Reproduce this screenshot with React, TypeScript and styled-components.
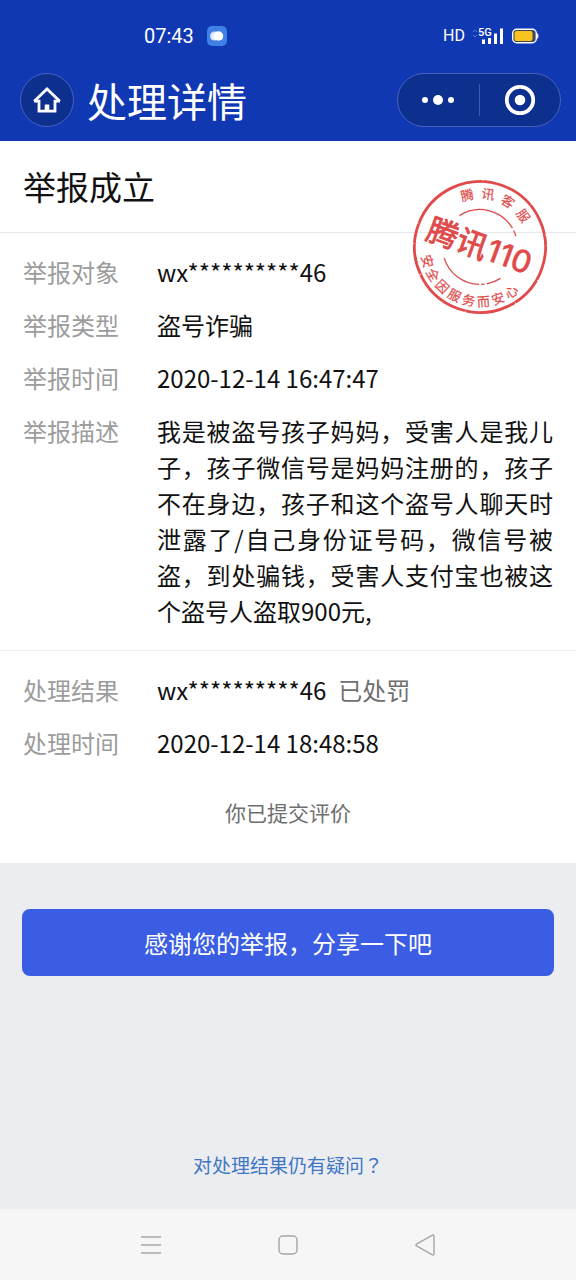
import React from 'react';
import styled, { createGlobalStyle } from 'styled-components';

const cjk = '"Noto Sans CJK SC", "Noto Sans", sans-serif';

const GlobalStyle = createGlobalStyle`
  *, *::before, *::after { box-sizing: border-box; }
  body {
    margin: 0;
    background: #ecedf1;
    font-family: ${cjk};
    color: #111;
  }
`;

const Page = styled.div`
  display: flex;
  flex-direction: column;
  min-height: 100vh;
`;

const Header = styled.header`
  background: #1138b3;
  color: #fff;
  padding-bottom: 14px;
`;

const StatusBar = styled.div`
  display: flex;
  align-items: center;
  justify-content: space-between;
  height: 73px;
  padding: 0 37px 2px 144px;
  font-family: Roboto, sans-serif;
`;

const StatusGroup = styled.div<{ $gap: number }>`
  display: flex;
  align-items: center;
  gap: ${({ $gap }) => $gap}px;
`;

const Clock = styled.time`
  font-size: 20px;
  line-height: 24px;
`;

const NetworkLabel = styled.span`
  font-size: 16px;
  line-height: 24px;
`;

const Signals = styled.div`
  display: flex;
  align-items: center;
  gap: 8px;
`;

const TitleBar = styled.div`
  display: flex;
  align-items: center;
  height: 54px;
  padding: 0 15px 0 20px;
`;

const HomeButton = styled.button`
  display: grid;
  place-items: center;
  width: 54px;
  height: 54px;
  padding: 0;
  border: 1px solid #4662bd;
  border-radius: 50%;
  background: #0d2f8e;
  color: #fff;
`;

const PageTitle = styled.h1`
  flex: 1;
  margin: 0 0 0 13px;
  font-size: 40px;
  font-weight: 400;
  line-height: 54px;
`;

const Capsule = styled.div`
  display: flex;
  align-items: center;
  width: 164px;
  height: 54px;
  border: 1px solid #4662bd;
  border-radius: 27px;
  background: #0d2f8e;
`;

const CapsuleButton = styled.button`
  display: grid;
  place-items: center;
  flex: 1;
  height: 32px;
  padding: 0;
  border: 0;
  background: none;
  color: #fff;

  & + & { border-left: 1px solid #3f59ab; }
`;

const Main = styled.main`
  display: flex;
  flex: 1;
  flex-direction: column;
`;

const Panel = styled.section`
  position: relative;
  background: #fff;
`;

const ResultTitle = styled.h2`
  margin: 0;
  padding: 21px 23px 22px;
  border-bottom: 1px solid #e9e9eb;
  font-size: 33px;
  font-weight: 400;
  line-height: 48px;
`;

const StampImage = styled.svg`
  position: absolute;
  top: 36px;
  right: 26px;
  width: 140px;
  height: 140px;
`;

const Details = styled.dl<{ $divided?: boolean }>`
  display: flex;
  flex-direction: column;
  gap: 17px;
  margin: 0;
  padding: 21px 23px ${({ $divided }) => ($divided ? 21 : 0)}px;
  border-bottom: ${({ $divided }) => ($divided ? '1px solid #ededef' : '0')};
`;

const DetailRow = styled.div`
  display: flex;
  font-size: 24px;
  line-height: 36px;
`;

const Label = styled.dt`
  flex: none;
  width: 134px;
  color: #9c9c9c;
`;

const Value = styled.dd`
  flex: 1;
  min-width: 0;
  margin: 0;
  text-align: justify;
`;

const Verdict = styled.span`
  margin-left: 12px;
  color: #707070;
`;

const ReviewNote = styled.p`
  margin: 0;
  padding: 33px 22px;
  color: #6e6e6e;
  font-size: 21px;
  line-height: 36px;
  text-align: center;
`;

const Actions = styled.div`
  display: flex;
  flex: 1;
  flex-direction: column;
  align-items: center;
  justify-content: space-between;
  gap: 46px;
  padding: 46px 22px 26px;
`;

const ShareButton = styled.button`
  width: 100%;
  height: 67px;
  padding: 0;
  border: 0;
  border-radius: 8px;
  background: #3a5de4;
  color: #fff;
  font-family: ${cjk};
  font-size: 24px;
  line-height: 36px;
`;

const HelpLink = styled.a`
  color: #3e76c4;
  font-size: 19px;
  line-height: 36px;
  text-decoration: none;
`;

const CenteredMark = styled.span`
  font-family: "Noto Sans CJK TC", sans-serif;
`;

const SystemNav = styled.nav`
  display: grid;
  grid-template-columns: repeat(3, 137px);
  justify-content: center;
  height: 71px;
  background: #f6f6f6;
`;

const SystemButton = styled.button`
  display: grid;
  place-items: center;
  padding: 0;
  border: 0;
  background: none;
  color: #a6a6a6;
`;

const RED = '#e04a4a';

/* Positions each character of a string around a circle, centred on the stamp's axis. */
function ring(text: string, radius: number, step: number, size: number, bottom = false) {
  const xs: string[] = [];
  const ys: string[] = [];
  const turns: string[] = [];
  Array.from(text).forEach((_, i, all) => {
    const offset = (i - (all.length - 1) / 2) * step;
    const turn = bottom ? -offset : offset;
    const a = (turn * Math.PI) / 180;
    const r = bottom ? radius : -radius;
    const cx = -r * Math.sin(a);
    const cy = r * Math.cos(a);
    const dx = -size / 2;
    const dy = size * 0.38;
    xs.push((cx + dx * Math.cos(a) - dy * Math.sin(a)).toFixed(2));
    ys.push((cy + dx * Math.sin(a) + dy * Math.cos(a)).toFixed(2));
    turns.push(turn.toFixed(2));
  });
  return { x: xs.join(' '), y: ys.join(' '), rotate: turns.join(' '), fontSize: size };
}

function Stamp() {
  return (
    <StampImage viewBox="-70 -70 140 140" role="img" aria-label="腾讯110">
      <g transform="rotate(20)" fill={RED} fontFamily={cjk}>
        <g fill="none" stroke={RED}>
          <circle r="65.5" strokeWidth="2.8" />
          <path d="M-30-22.5A37.5 37.5 0 0 1 24-28.8" strokeWidth="1.3" />
          <path d="M26-27A37.5 37.5 0 0 1 30-22.5" strokeWidth="1.3" />
          <path d="M-30 22.5A37.5 37.5 0 0 0 12 35.5M14 34.8L17 33.4M19 32.3A37.5 37.5 0 0 0 30 22.5" strokeWidth="1.3" />
          <g stroke="#fff" strokeWidth="0.8" opacity="0.75">
            <path d="M64-20l4 1M62-24l5 2M57-34l4 3M-63 19l-4 3M-66-2l-2 3M-46 46l-3 2M-17 64l-1 4M8 65l1 3M33-57l2-3M-20-63l1-4M65 12l3-1M52 40l3 4" />
          </g>
        </g>
        <g stroke={RED} strokeWidth="0.2">
          <text {...ring('腾讯客服', 53.5, 22.6, 13)}>腾讯客服</text>
          <text {...ring('安全因服务而安心', 54.5, 15.7, 13, true)}>安全因服务而安心</text>
        </g>
        <text x="-55" y="11" fontSize="31" stroke={RED} strokeWidth="0.9">
          腾讯
          <tspan dx="1" y="10" fontFamily="Inter, sans-serif" fontSize="31" fontWeight="500" strokeWidth="0.3">110</tspan>
        </text>
      </g>
    </StampImage>
  );
}

function WeatherIcon() {
  return (
    <svg width="20" height="20" viewBox="0 0 20 20" aria-hidden="true">
      <rect width="20" height="20" rx="5" fill="#3f7fe6" />
      <circle cx="7.5" cy="10" r="4.5" fill="#cfe2fb" />
      <rect x="5" y="7" width="11" height="7" rx="3.5" fill="#e9f2fe" />
      <circle cx="11.5" cy="10" r="4.7" fill="#fff" />
    </svg>
  );
}

function SignalIcon() {
  return (
    <svg width="31" height="18" viewBox="0 0 31 18" fill="#fff" aria-hidden="true">
      <path d="M1 5l2-2 2 2M1 8l2 2 2-2" fill="none" stroke="#5b78cf" strokeWidth="1" />
      <text x="6" y="9" fontSize="11" fontWeight="500" fontFamily="Roboto, sans-serif">5G</text>
      <path d="M10 12.5h3v4.5h-3zM16 11h3v6h-3zM22 6.5h3v10.5h-3zM28 1.5h3v15.5h-3z" />
    </svg>
  );
}

function BatteryIcon() {
  return (
    <svg width="28" height="16" viewBox="0 0 28 16" aria-hidden="true">
      <rect x="1.7" y="1.2" width="23.6" height="13.6" rx="4" fill="#3e4660" stroke="#fff" strokeWidth="1.4" />
      <rect x="3.5" y="3" width="18" height="10" rx="2" fill="#f8c31c" />
      <path d="M26.2 5.5c1.2.5 1.2 4.5 0 5z" fill="#fff" stroke="#fff" strokeWidth="0.6" />
    </svg>
  );
}

const report = [
  { label: '举报对象', value: 'wx**********46' },
  { label: '举报类型', value: '盗号诈骗' },
  { label: '举报时间', value: '2020-12-14 16:47:47' },
  {
    label: '举报描述',
    value:
      '我是被盗号孩子妈妈，受害人是我儿子，孩子微信号是妈妈注册的，孩子不在身边，孩子和这个盗号人聊天时泄露了/自己身份证号码，微信号被盗，到处骗钱，受害人支付宝也被这个盗号人盗取900元,',
  },
];

export default function App() {
  return (
    <Page lang="zh-CN">
      <GlobalStyle />
      <Header>
        <StatusBar>
          <StatusGroup $gap={13}>
            <Clock>07:43</Clock>
            <WeatherIcon />
          </StatusGroup>
          <StatusGroup $gap={7}>
            <NetworkLabel>HD</NetworkLabel>
            <Signals>
              <SignalIcon />
              <BatteryIcon />
            </Signals>
          </StatusGroup>
        </StatusBar>
        <TitleBar>
          <HomeButton type="button" aria-label="首页">
            <svg width="28" height="26" viewBox="0 0 28 26" fill="none" stroke="currentColor" strokeWidth="2.8" aria-hidden="true">
              <path d="M1.2 14.2L14 2l12.8 12.2" />
              <path d="M1 14.2h5v10h16v-10h5" strokeWidth="2.8" />
              <path d="M14 24v-6.5" strokeWidth="4.6" />
            </svg>
          </HomeButton>
          <PageTitle>处理详情</PageTitle>
          <Capsule>
            <CapsuleButton type="button" aria-label="更多">
              <svg width="32" height="10" viewBox="0 0 32 10" fill="currentColor" aria-hidden="true">
                <circle cx="3" cy="5" r="3" />
                <circle cx="16" cy="5" r="5" />
                <circle cx="29" cy="5" r="3" />
              </svg>
            </CapsuleButton>
            <CapsuleButton type="button" aria-label="关闭">
              <svg width="32" height="32" viewBox="0 0 32 32" aria-hidden="true">
                <circle cx="16" cy="16" r="13.2" fill="none" stroke="currentColor" strokeWidth="3.8" />
                <circle cx="16" cy="16" r="5.3" fill="currentColor" />
              </svg>
            </CapsuleButton>
          </Capsule>
        </TitleBar>
      </Header>

      <Main>
        <Panel>
          <ResultTitle>举报成立</ResultTitle>
          <Details $divided>
            {report.map(({ label, value }) => (
              <DetailRow key={label}>
                <Label>{label}</Label>
                <Value>{value}</Value>
              </DetailRow>
            ))}
          </Details>
          <Details>
            <DetailRow>
              <Label>处理结果</Label>
              <Value>
                wx**********46<Verdict>已处罚</Verdict>
              </Value>
            </DetailRow>
            <DetailRow>
              <Label>处理时间</Label>
              <Value>2020-12-14 18:48:58</Value>
            </DetailRow>
          </Details>
          <ReviewNote>你已提交评价</ReviewNote>
          <Stamp />
        </Panel>
        <Actions>
          <ShareButton type="button">感谢您的举报，分享一下吧</ShareButton>
          <HelpLink href="#help">
            对处理结果仍有疑问<CenteredMark lang="zh-TW">？</CenteredMark>
          </HelpLink>
        </Actions>
      </Main>

      <SystemNav>
        <SystemButton type="button" aria-label="最近任务">
          <svg width="20" height="20" viewBox="0 0 20 20" stroke="currentColor" strokeWidth="1.5" aria-hidden="true">
            <path d="M0 2h20M0 10h20M0 18h20" />
          </svg>
        </SystemButton>
        <SystemButton type="button" aria-label="主屏幕">
          <svg width="20" height="20" viewBox="0 0 20 20" fill="none" stroke="currentColor" strokeWidth="1.4" aria-hidden="true">
            <rect x="1" y="1" width="18" height="18" rx="4" />
          </svg>
        </SystemButton>
        <SystemButton type="button" aria-label="返回">
          <svg width="20" height="22" viewBox="0 0 20 22" fill="none" stroke="currentColor" strokeWidth="1.4" strokeLinejoin="round" aria-hidden="true">
            <path d="M1.5 10.1L17 1.3Q19 .5 19 2.5V19.5Q19 21.5 17 20.7L1.5 11.9Q.3 11 1.5 10.1Z" />
          </svg>
        </SystemButton>
      </SystemNav>
    </Page>
  );
}
